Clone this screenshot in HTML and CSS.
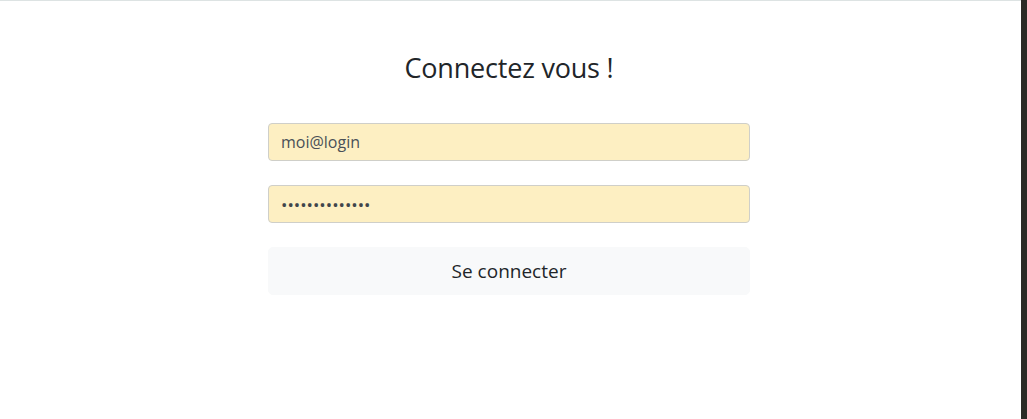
FILE: index.html
```html
<!DOCTYPE html>
<html lang="fr">
<head>
<meta charset="utf-8">
<title>Connexion</title>
<link rel="stylesheet" href="styles.css">
</head>
<body>
<div class="page">
  <main class="main">
    <form class="login">
      <h3 class="title">Connectez vous !</h3>
      <input class="field" type="email" value="moi@login">
      <input class="field field-pass" type="password" value="motdepasse123!">
      <button class="btn" type="button">Se connecter</button>
    </form>
  </main>
  <div class="side"></div>
</div>
</body>
</html>
```

FILE: styles.css
```css
* { box-sizing: border-box; }
html, body { margin: 0; height: 100%; }
body {
  font-family: "Open Sans", "Noto Sans", sans-serif;
  color: #212529;
  background: #fff;
}
.page {
  display: flex;
  height: 419px;
  border-top: 1px solid #dde3e3;
}
.main {
  flex: 1;
  padding-right: 3px;
}
.side {
  width: 6px;
  background: #2a2a25;
  margin-top: -1px;
}
.login {
  width: 482px;
  margin: 0 auto;
  display: flex;
  flex-direction: column;
}
.title {
  margin: 51px 0 39px;
  font-weight: 400;
  font-size: 27px;
  line-height: 1.2;
  text-align: center;
  letter-spacing: -0.2px;
}
.field {
  height: 38px;
  margin: 0 0 24px;
  padding: 0 12px;
  border: 1px solid #cfcfc9;
  border-radius: 4px;
  background: #fdefc2;
  color: #495057;
  font-family: inherit;
  font-size: 16px;
}
.field-pass {
  font-size: 17px;
  letter-spacing: 0;
  color: #3f454b;
}
.btn {
  height: 48px;
  border: 1px solid #f8f9fa;
  border-radius: 5px;
  background: #f8f9fa;
  color: #212529;
  font-family: inherit;
  font-size: 19px;
  cursor: pointer;
}
```
